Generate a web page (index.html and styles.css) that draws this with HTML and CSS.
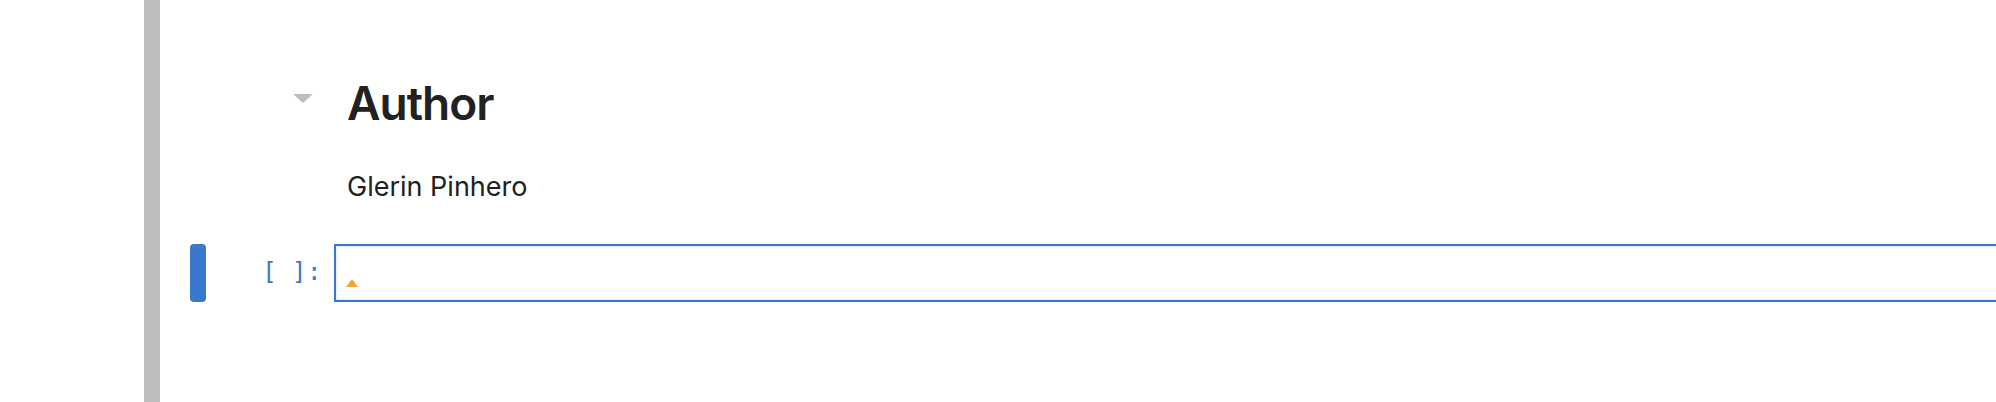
FILE: index.html
```html
<!DOCTYPE html>
<html>
<head>
<meta charset="utf-8">
<link rel="stylesheet" href="styles.css">
</head>
<body>
<div class="app">
  <div class="rail"></div>
  <div class="notebook">
    <div class="cell md">
      <div class="collapser"></div>
      <div class="prompt"><span class="caret-down"></span></div>
      <div class="md-body">
        <h1>Author</h1>
        <p>Glerin Pinhero</p>
      </div>
    </div>
    <div class="cell code">
      <div class="collapser"><div class="bar"></div></div>
      <div class="prompt code-prompt">[ ]:</div>
      <div class="editor"><span class="warn"></span></div>
    </div>
  </div>
</div>
</body>
</html>
```
FILE: styles.css
```css
html, body {
  margin: 0;
  padding: 0;
  background: #ffffff;
  overflow: hidden;
}
body {
  width: 1996px;
  height: 402px;
  font-family: Inter, "Noto Sans", sans-serif;
  color: #212121;
}
.app {
  display: flex;
  height: 402px;
  padding-left: 144px;
}
.rail {
  width: 16px;
  flex: none;
  background: #bdbdbd;
}
.notebook {
  flex: 1;
  min-width: 0;
  padding-top: 74px;
  padding-left: 30px;
}
.cell {
  display: flex;
}
.collapser {
  width: 16px;
  flex: none;
}
.prompt {
  width: 128px;
  flex: none;
  box-sizing: border-box;
}
.md .prompt {
  display: flex;
  justify-content: flex-end;
  align-items: flex-start;
  padding-right: 21px;
  padding-top: 20px;
}
.caret-down {
  width: 0;
  height: 0;
  border-left: 10.5px solid transparent;
  border-right: 10.5px solid transparent;
  border-top: 9px solid #bdbdbd;
}
.md-body {
  padding-left: 13px;
}
.md-body h1 {
  margin: 0;
  font-size: 46px;
  font-weight: 600;
  line-height: 58px;
  letter-spacing: -1px;
}
.md-body p {
  margin: 0;
  margin-top: 39px;
  font-size: 27px;
  line-height: 32px;
}
.code {
  margin-top: 41px;
  height: 58px;
}
.bar {
  width: 16px;
  height: 58px;
  background: #3a77cf;
  border-radius: 4px;
}
.code-prompt {
  font-family: "DejaVu Sans Mono", "Liberation Mono", monospace;
  font-size: 24px;
  letter-spacing: 0.5px;
  color: #3b78cc;
  text-align: right;
  padding-right: 12px;
  padding-top: 14px;
  line-height: 28px;
  white-space: pre;
}
.editor {
  flex: none;
  width: 1800px;
  height: 58px;
  box-sizing: border-box;
  border: 2px solid #3a77cf;
  box-shadow: inset 0 0 3px rgba(58, 119, 207, 0.3);
  padding-left: 10px;
  padding-top: 33px;
}
.warn {
  display: block;
  width: 0;
  height: 0;
  border-left: 6px solid transparent;
  border-right: 6px solid transparent;
  border-bottom: 8px solid #f2a431;
}
```
